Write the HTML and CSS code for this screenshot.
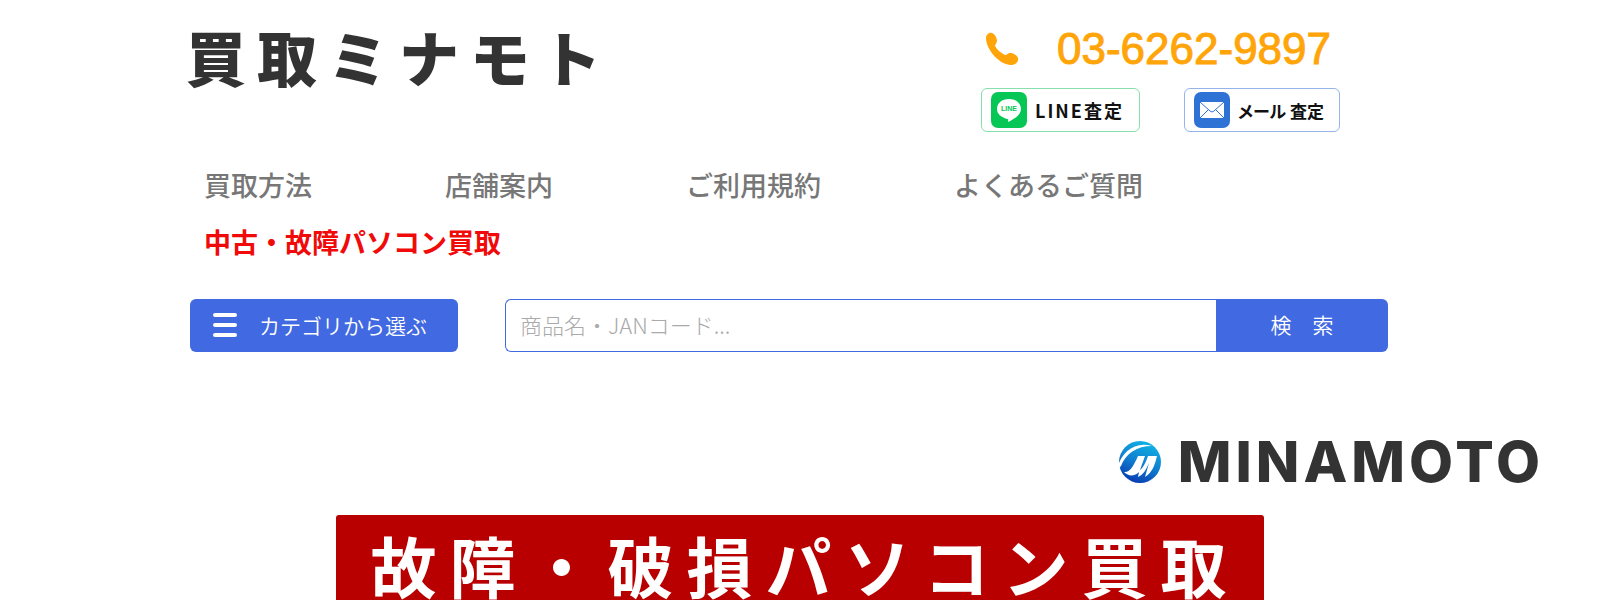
FILE: index.html
```html
<!DOCTYPE html>
<html lang="ja">
<head>
  <meta charset="utf-8">
  <title>買取ミナモト</title>
  <link rel="stylesheet" href="styles.css">
</head>
<body>
  <header class="header">
    <div class="header-top">
      <h1 class="site-name">買取ミナモト</h1>
      <div class="contact">
        <a class="tel" href="tel:0362629897">
          <svg class="tel-icon" viewBox="0 0 34 34" aria-hidden="true">
            <path d="M1 6C1 3 4 0 7 1c3 1 5 5 5 8 0 2-2 3-2 5 2 4 6 7 10 9 2 0 3-2 5-2 3 0 7 2 8 5 1 4-3 7-7 7C15 33 1 18 1 6z"/>
          </svg>
          <span>03-6262-9897</span>
        </a>
        <div class="contact-links">
          <a class="contact-link line" href="#line">
            <svg viewBox="0 0 36 36" aria-hidden="true">
              <rect width="36" height="36" rx="7" fill="#06c755"/>
              <path d="M18 7C11 7 6 11 6 17c0 5 4 8 10 10 2 0 1 1 1 3 6-3 13-7 13-13S25 7 18 7z" fill="#fff"/>
              <text x="18" y="19" class="line-mark">LINE</text>
            </svg>
            <span>LINE査定</span>
          </a>
          <a class="contact-link mail" href="#mail">
            <svg viewBox="0 0 36 36" aria-hidden="true">
              <rect width="36" height="36" rx="7" fill="#2f72d6"/>
              <rect x="6" y="10" width="24" height="16" rx="1" fill="#fff"/>
              <path d="M6 10l10 9q2 2 4 0l10-9M6 26l8-8M30 26l-8-8" fill="none" stroke="#2f72d6"/>
            </svg>
            <span>メール 査定</span>
          </a>
        </div>
      </div>
    </div>

    <nav class="nav">
      <a href="#method">買取方法</a>
      <a href="#shop">店舗案内</a>
      <a href="#terms">ご利用規約</a>
      <a href="#faq">よくあるご質問</a>
      <a class="nav-hot" href="#pc">中古・故障パソコン買取</a>
    </nav>

    <div class="search-row">
      <button class="category-btn" type="button">
        <svg viewBox="0 0 26 26" aria-hidden="true">
          <path d="M3 3h20M3 13h20M3 23h20"/>
        </svg>
        カテゴリから選ぶ
      </button>
      <form class="search">
        <input type="text" placeholder="商品名・JANコード..." aria-label="商品名・JANコード">
        <button type="button">検　索</button>
      </form>
    </div>
  </header>

  <main>
    <div class="brand">
      <svg viewBox="0 0 44 44" aria-hidden="true">
        <defs>
          <linearGradient id="ball" x1="0.7" y1="0" x2="0.3" y2="1">
            <stop offset="0" stop-color="#10b4e4"/>
            <stop offset="0.5" stop-color="#1080d0"/>
            <stop offset="1" stop-color="#0838b0"/>
          </linearGradient>
        </defs>
        <circle cx="22" cy="22" r="21" fill="url(#ball)"/>
        <path d="M0 26C4 12 17 1 34 6 19 6 8 13 3 26c-2 2-3 2-3 0z" fill="#fff"/>
        <path d="M20 16h7l-5 14c3-2 6-8 8-14h9c-2 8-4 16-12 21l4-14c-3 7-6 12-11 14l1-5c-4 4-10 5-15 0 6 1 10-7 14-16z" fill="#fff"/>
      </svg>
      <span>MINAMOTO</span>
    </div>
    <h2 class="banner">故障・破損パソコン買取</h2>
  </main>
</body>
</html>
```
FILE: styles.css
```css
* {
  box-sizing: border-box;
}

body {
  margin: 0;
  height: 100vh;
  overflow: hidden;
  background: #fff;
  color: #333;
  font-family: "Noto Sans CJK JP", sans-serif;
}

a {
  color: inherit;
  text-decoration: none;
}

.header {
  padding: 20px 212px 0 190px;
}

.header-top {
  display: flex;
  justify-content: space-between;
  height: 136px;
}

.site-name {
  margin: 0 0 0 -4px;
  font-size: 60px;
  font-weight: 900;
  line-height: 72px;
  letter-spacing: 11px;
}

.contact {
  margin-right: 48px;
}

.tel {
  display: flex;
  align-items: center;
  gap: 38px;
  height: 58px;
  padding-left: 4px;
  color: #ffa50a;
  font-family: "Liberation Sans", sans-serif;
  font-size: 44px;
  -webkit-text-stroke: 1px #ffa50a;
}

.tel-icon {
  width: 34px;
  height: 34px;
  fill: currentColor;
}

.contact-links {
  display: flex;
  gap: 44px;
  margin-top: 10px;
}

.contact-link {
  display: flex;
  align-items: center;
  gap: 8px;
  height: 44px;
  padding: 0 9px;
  border: 1px solid #86dfac;
  border-radius: 6px;
  color: #111;
  font-size: 18px;
  font-weight: bold;
  white-space: nowrap;
}

.contact-link.line {
  width: 159px;
  letter-spacing: 2px;
}

.contact-link.mail {
  width: 156px;
  border-color: #94b4ea;
  font-size: 17px;
  font-feature-settings: "palt";
}

.contact-link svg {
  flex: none;
  width: 36px;
  height: 36px;
}

.line-mark {
  fill: #06c755;
  font-family: "Liberation Sans", sans-serif;
  font-size: 7px;
  font-weight: bold;
  letter-spacing: 0;
  text-anchor: middle;
}

.nav {
  display: flex;
  flex-wrap: wrap;
  column-gap: 133px;
  row-gap: 17px;
  padding: 9px 14px 0;
  color: #777;
  font-size: 27px;
  font-weight: 500;
  line-height: 40px;
}

.nav-hot {
  color: #f00a0a;
  font-weight: bold;
}

.search-row {
  display: flex;
  gap: 47px;
  margin-top: 37px;
}

.category-btn,
.search button {
  border: 0;
  background: #4169e1;
  color: #fff;
  font-family: inherit;
  font-size: 21px;
  font-weight: 350;
}

.category-btn {
  display: flex;
  align-items: center;
  gap: 21px;
  width: 268px;
  height: 53px;
  padding: 0 22px 2px;
  border-radius: 6px;
  white-space: nowrap;
}

.category-btn svg {
  flex: none;
  width: 26px;
  height: 26px;
  stroke: #fff;
  stroke-width: 4;
  stroke-linecap: round;
}

.search {
  display: flex;
  flex: 1;
}

.search input {
  flex: 1;
  min-width: 0;
  padding: 0 14px 3px;
  border: 1px solid #4169e1;
  border-right: 0;
  border-radius: 6px 0 0 6px;
  font-family: inherit;
  font-size: 22px;
  font-weight: 300;
}

.search input::placeholder {
  color: #aaa;
}

.search button {
  width: 172px;
  padding-bottom: 4px;
  border-radius: 0 6px 6px 0;
}

.brand {
  display: flex;
  justify-content: flex-end;
  align-items: center;
  gap: 16px;
  margin-top: 78px;
  padding-right: 56px;
  font-family: Inter, sans-serif;
  font-size: 57px;
  font-weight: 800;
  line-height: 64px;
  letter-spacing: 4px;
}

.brand svg {
  width: 44px;
  height: 44px;
}

.banner {
  width: 58%;
  margin: 21px auto 0;
  padding-left: 10px;
  border-radius: 3px;
  background: #b80000;
  color: #fff;
  font-size: 66px;
  font-weight: bold;
  line-height: 98px;
  letter-spacing: 13px;
  text-align: center;
  white-space: nowrap;
}
```
